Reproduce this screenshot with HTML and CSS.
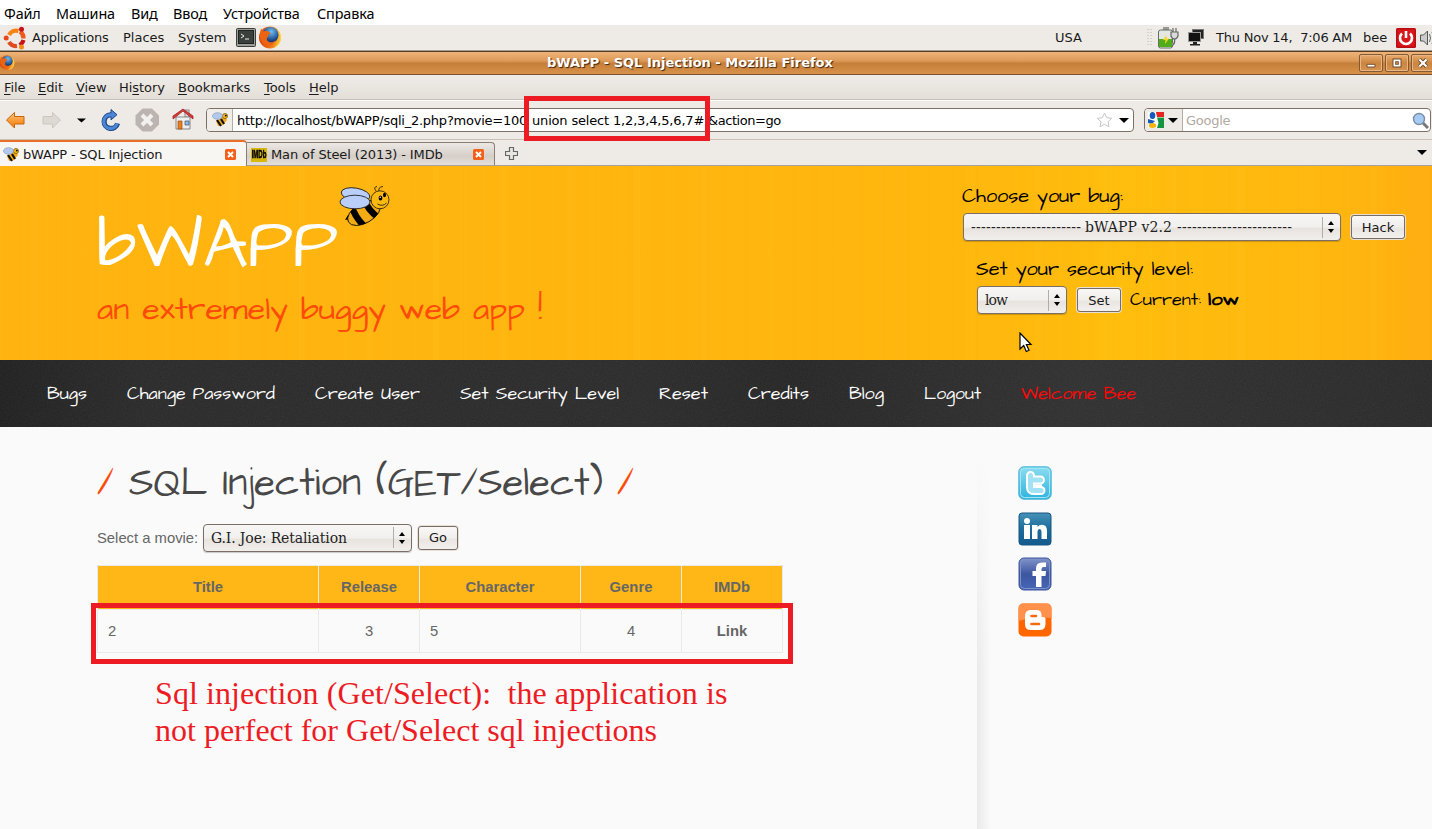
FILE: index.html
```html
<!DOCTYPE html>
<html lang="en">
<head>
<meta charset="utf-8">
<title>bWAPP - SQL Injection</title>
<link rel="stylesheet" href="styles.css">
</head>
<body>
<svg class="defs" width="0" height="0">
  <defs>
    <linearGradient id="gOrange" x1="0" y1="0" x2="0" y2="1"><stop offset="0" stop-color="#fcc27a"/><stop offset="1" stop-color="#f57900"/></linearGradient>
    <linearGradient id="gTw" x1="0" y1="0" x2="0" y2="1"><stop offset="0" stop-color="#8bdcf0"/><stop offset="1" stop-color="#2fb4de"/></linearGradient>
    <linearGradient id="gIn" x1="0" y1="0" x2="0" y2="1"><stop offset="0" stop-color="#4591b8"/><stop offset=".5" stop-color="#1c6c9c"/><stop offset="1" stop-color="#15598c"/></linearGradient>
    <linearGradient id="gFb" x1="0" y1="0" x2="0" y2="1"><stop offset="0" stop-color="#8294c9"/><stop offset=".5" stop-color="#3c56a0"/><stop offset="1" stop-color="#4867b8"/></linearGradient>
    <radialGradient id="gFx" cx=".55" cy=".3" r=".6"><stop offset="0" stop-color="#6fc0f2"/><stop offset="1" stop-color="#12377e"/></radialGradient>
    <linearGradient id="gFlame" x1="0" y1="0" x2="1" y2="0"><stop offset="0" stop-color="#d9420e"/><stop offset=".6" stop-color="#f07c14"/><stop offset="1" stop-color="#fbc93a"/></linearGradient>
    <filter id="grain"><feTurbulence type="fractalNoise" baseFrequency=".8" numOctaves="2" seed="4"/><feColorMatrix type="saturate" values="0"/></filter>
    <clipPath id="beeBody"><ellipse cx="25" cy="28" rx="18" ry="10" transform="rotate(-30 25 28)"/></clipPath>
  </defs>
  <symbol id="bee" viewBox="0 0 51 42">
    <path d="M9 30l-3 5 6-1" fill="#000"/>
    <g clip-path="url(#beeBody)"><path fill="#f3ab14" d="M0 0h51v42H0z"/><path d="M12 20q4 12 13 21M25 13q3 12 15 20" stroke="#000" stroke-width="6.500" fill="none"/></g>
    <ellipse cx="25" cy="28" rx="18" ry="10" transform="rotate(-30 25 28)" fill="none" stroke="#000" stroke-width=".8"/>
    <circle cx="41" cy="14.800" r="9" fill="#fcb90f" stroke="#000" stroke-width=".7"/>
    <path d="M37 6q-3-4 1-4.500M40 6q-1-4 4-4.500M38.500 19q5 3 9-1" fill="none" stroke="#222" stroke-width=".9"/>
    <ellipse cx="41.500" cy="13" rx="1.900" ry="2.600"/><ellipse cx="45.500" cy="10" rx="1.500" ry="2.200"/><circle cx="41.200" cy="12.300" r=".7" fill="#fff"/>
    <ellipse cx="16.500" cy="9.500" rx="14.500" ry="6.500" transform="rotate(10 16 10)" fill="#b9cef9" stroke="#222" stroke-width=".9"/>
    <ellipse cx="16" cy="17" rx="15" ry="6.800" fill="#b9cef9" stroke="#222" stroke-width=".9"/>
  </symbol>
  <symbol id="beefav" viewBox="0 0 17 15">
    <path d="M4 9l9-5 2 4-4 5-5 1z" fill="#f3ab14"/><path d="M5 8l4 6M9 7l3 5" stroke="#111" stroke-width="2.200"/><circle cx="13" cy="4" r="2.600" fill="#f5b316" stroke="#5e4708" stroke-width=".6"/><circle cx="13.800" cy="3.600" r=".9"/>
    <ellipse cx="5.500" cy="4" rx="5" ry="3.300" fill="#b3c8ee" stroke="#7d91b5" stroke-width=".6"/>
  </symbol>
  <symbol id="fox" viewBox="0 0 24 24">
    <circle cx="12" cy="11.500" r="11" fill="url(#gFlame)"/>
    <circle cx="12.500" cy="9" r="8" fill="url(#gFx)"/>
    <path d="M1.500 9L3 2.500l2.500 3q3-1.500 5.500.5l2 1.500-3 1.500q1 2-1 2.500-1 3 2.500 4.500 4 1 6-2-2 6-8 5.500Q2 17 1.500 9z" fill="#ea6412"/>
    <path d="M19 4.500q5 5 2.500 11-3 6-9 6.500 9 0 10.500-9Q23.500 7 19 4.500z" fill="#fdd651"/>
  </symbol>
  <symbol id="updown" viewBox="0 0 8 14"><path d="M1 5l3-4 3 4zM1 9l3 4 3-4z"/></symbol>
  <symbol id="down" viewBox="0 0 10 5"><path d="M0 0h10L5 5z"/></symbol>
  <symbol id="tabx" viewBox="0 0 11 11"><rect width="11" height="11" rx="1.500" fill="#f4601a"/><path d="M3 3l5 5M8 3L3 8" stroke="#fff" stroke-width="1.900"/></symbol>
</svg>

<div class="screen">
  <div class="vm-menu"><span class="w52">Файл</span><span class="w75">Машина</span><span class="w42">Вид</span><span class="w50">Ввод</span><span class="w94">Устройства</span><span>Справка</span></div>

  <div class="panel">
    <svg class="ubuntu" width="24" height="24" viewBox="0 0 24 24"><g fill="none" stroke-width="4.200"><path d="M6 9a8 8 0 0 1 9.500-4" stroke="#f58410"/><path d="M17 5.500a8 8 0 0 1 3.500 7" stroke="#ee5a1c"/><path d="M20.500 14a8 8 0 0 1-4 5" stroke="#c6141b"/><path d="M14 20a8 8 0 0 1-8-4" stroke="#e04a1c"/></g><circle cx="3.200" cy="12" r="2.500" fill="#e6481c"/><circle cx="18.500" cy="3.300" r="2.500" fill="#c7141b"/><circle cx="18.500" cy="21" r="2.500" fill="#f58a14"/></svg>
    <span class="w91 tight">Applications</span><span class="w55">Places</span><span class="w58">System</span>
    <svg width="21" height="20" viewBox="0 0 21 20"><rect x=".5" y=".5" width="19" height="18" rx="1" fill="#9a9d98" stroke="#3c3f3b"/><rect x="2.500" y="2.500" width="15" height="13" fill="#3a403c" stroke="#222"/><path d="M5 6l3 2-3 2M9 11h4" stroke="#eee" fill="none"/></svg>
    <svg class="foxbig" width="24" height="24"><use href="#fox"/></svg>
    <span class="usa">USA</span>
    <svg class="grip" width="5" height="18" viewBox="0 0 5 18"><path d="M1 0v18M4 0v18" stroke="#bbb5ad" stroke-dasharray="1 2"/></svg>
    <svg class="battery" width="23" height="22" viewBox="0 0 23 22"><rect x="6" y="0" width="6" height="3" fill="#999"/><rect x="1.500" y="3" width="14" height="18" rx="2" fill="#e5e8e2" stroke="#666b66"/><path d="M2 12h13v8H2z" fill="#4fae18"/><path d="M9.500 8l-3.500 5h2.500l-.5 4 4-5.500H9.500z" fill="#f5d32c"/><path d="M14 5h7v4q-1 3-3.500 3T14 9zM17.500 12q1 5-3 7M16 5V1M19 5V1" fill="#d8dad5" stroke="#666" stroke-width="1.200"/></svg>
    <svg class="net" width="17" height="17" viewBox="0 0 17 17"><rect x="4.500" y=".5" width="11" height="9" fill="#222" stroke="#777"/><rect x=".5" y="3.500" width="12" height="9" fill="#111" stroke="#999"/><path d="M5 13h4v2h3v1.500H2V15h3z" fill="#222"/></svg>
    <span class="clock">Thu Nov 14,&nbsp; 7:06 AM</span><span class="user">bee</span>
    <svg width="20" height="20" viewBox="0 0 20 20"><rect width="20" height="20" rx="1.500" fill="#b80d12"/><rect x="1.500" y="1.500" width="17" height="17" fill="#d9161b"/><path d="M6 5.500a6 6 0 1 0 8 0M10 3v7" fill="none" stroke="#fff" stroke-width="2.600"/></svg>
    <svg class="spk" width="13" height="16" viewBox="0 0 13 16"><path d="M.5 5h3l4-4v14l-4-4h-3z" fill="#ccc" stroke="#555"/><path d="M9.500 4q2 4 0 8M12 2q3 6 0 12" fill="none" stroke="#666"/></svg>
  </div>

  <div class="titlebar">
    <svg width="16" height="16"><use href="#fox"/></svg>
    <div class="title">bWAPP - SQL Injection - Mozilla Firefox</div>
    <div class="wbtns">
      <svg viewBox="0 0 24 18"><path d="M7.500 10.500h9v3h-9z" fill="#fff" stroke="#6b4524"/></svg>
      <svg viewBox="0 0 24 18"><path d="M9 6h6v6H9z" fill="none" stroke="#6b4524" stroke-width="4"/><path d="M9 6h6v6H9z" fill="none" stroke="#fff" stroke-width="2"/></svg>
      <svg viewBox="0 0 24 18"><path d="M8 5l8 8M16 5l-8 8" stroke="#6b4524" stroke-width="4.500"/><path d="M8 5l8 8M16 5l-8 8" stroke="#fff" stroke-width="2.500"/></svg>
    </div>
  </div>

  <div class="menubar"><span class="w34"><u>F</u>ile</span><span class="w38"><u>E</u>dit</span><span class="w43"><u>V</u>iew</span><span class="w59">Hi<u>s</u>tory</span><span class="w86"><u>B</u>ookmarks</span><span class="w45"><u>T</u>ools</span><span><u>H</u>elp</span></div>

  <div class="toolbar">
    <svg class="nav-ic" width="200" height="30" viewBox="0 0 200 30">
      <path d="M6.500 15l8-7.500v4h9.500v7.500h-9.500v4z" fill="url(#gOrange)" stroke="#c8650a"/>
      <path d="M60.500 15l-8-7.500v4H43v7.500h9.500v4z" fill="#dcd9d3" stroke="#cbc6bf"/>
      <path d="M77 13.500h9l-4.500 4z"/>
      <path d="M112 9.800h-1.500a6.800 6.800 0 1 0 7 8.500" fill="none" stroke="#204a87" stroke-width="5.200"/><path d="M111 4.500l6 5.200-6 5.200z" fill="#4c86d6" stroke="#204a87"/><path d="M112 9.800h-1.500a6.800 6.800 0 1 0 6.600 8.500" fill="none" stroke="#4c86d6" stroke-width="3.200"/>
      <path d="M142.500 3.500h9.500l7 7v9l-7 7h-9.500l-7-7v-9z" fill="#bcb4b1"/><path d="M142 10l10 10M152 10l-10 10" stroke="#f3f1ef" stroke-width="4"/>
      <rect x="185" y="5" width="4" height="7" fill="#ddd" stroke="#888"/><path d="M176 12h14v12h-14z" fill="#eee" stroke="#888"/><path d="M173 14l10-8 10 8v-3l-10-7-10 7z" fill="#d03a3a" stroke="#a22" stroke-width=".8"/><path d="M178 16h4v8h-4z" fill="#e87f23" stroke="#9b4c10" stroke-width=".7"/><path d="M185 16h4v4h-4z" fill="#8ebbe8" stroke="#456" stroke-width=".7"/>
    </svg>
    <div class="urlbox">
      <div class="fav"><svg width="17" height="15"><use href="#beefav"/></svg></div>
      <span class="url-a">http://localhost/bWAPP/sqli_2.php?movie=100</span><span class="url-b">union select 1,2,3,4,5,6,7#</span><span class="url-c">&amp;action=go</span>
      <svg class="star" width="17" height="16" viewBox="0 0 17 16"><path d="M8.500 1l2.200 4.700 5 .6-3.700 3.500 1 5-4.500-2.500L4 14.800l1-5L1.300 6.300l5-.6z" fill="#fff" stroke="#c5c5c5"/></svg>
      <svg width="10" height="5"><use href="#down"/></svg>
    </div>
    <div class="search">
      <div class="engine">
        <svg width="16" height="16" viewBox="0 0 16 16"><rect width="16" height="16" fill="#fff"/><path d="M8 0h8v5H9z" fill="#e8221e"/><path d="M9 5.500h7V16H9l1.500-5z" fill="#15953f"/><ellipse cx="4.500" cy="3.500" rx="2.800" ry="3.500" fill="#1559bd"/><path d="M0 7l7 2-3 3-4-1z" fill="#1559bd"/><ellipse cx="4.500" cy="13.500" rx="3.700" ry="2.500" fill="#f6b410"/></svg>
        <svg width="10" height="5"><use href="#down"/></svg>
      </div>
      <span class="ph">Google</span>
      <svg width="17" height="17" viewBox="0 0 17 17"><path d="M10 10l6 6" stroke="#777" stroke-width="3"/><circle cx="7" cy="7" r="5.500" fill="#a5cbf3" stroke="#7b8ea5" stroke-width="1.400"/></svg>
    </div>
  </div>

  <div class="tabs">
    <div class="tab on"><svg class="tic" width="17" height="15"><use href="#beefav"/></svg><span>bWAPP - SQL Injection</span><svg class="x" width="11" height="11"><use href="#tabx"/></svg></div>
    <div class="tab off"><div class="imdb"><b>IMDb</b></div><span>Man of Steel (2013) - IMDb</span><svg class="x" width="11" height="11"><use href="#tabx"/></svg></div>
    <svg class="plus" width="13" height="13" viewBox="0 0 13 13"><path d="M4.500.5h4v4h4v4h-4v4h-4v-4h-4v-4h4z" fill="#e8e6e0" stroke="#666" stroke-width="1.200"/></svg>
    <svg class="alltabs" width="10" height="5"><use href="#down"/></svg>
  </div>

  <header class="hero">
    <div class="brand">
      <div class="brand-row">
        <svg class="hand logo" width="241" height="78"><text x="0" y="74" textLength="241" lengthAdjust="spacingAndGlyphs">bWAPP</text></svg>
        <svg class="mascot" width="51" height="42"><use href="#bee"/></svg>
      </div>
      <svg class="hand tagline" width="450" height="50"><text x="0" y="29" textLength="428" lengthAdjust="spacingAndGlyphs">an extremely buggy web app</text><text x="441" y="29">!</text></svg>
    </div>
    <div class="controls">
      <svg class="hand label" width="166" height="28"><text x="0" y="19" textLength="161" lengthAdjust="spacingAndGlyphs">Choose your bug:</text></svg>
      <div class="row1">
        <div class="select sel-bug"><svg width="350" height="24"><text x="7" y="17" textLength="110">----------------------</text><text x="121" y="17" textLength="87">bWAPP v2.2</text><text x="213" y="17" textLength="115">-----------------------</text></svg><i></i><svg width="8" height="14"><use href="#updown"/></svg></div>
        <div class="btn hack">Hack</div>
      </div>
      <svg class="hand label l2" width="222" height="28"><text x="0" y="19" textLength="217" lengthAdjust="spacingAndGlyphs">Set your security level:</text></svg>
      <div class="row2">
        <div class="select sel-low"><svg width="60" height="24"><text x="7" y="17" textLength="23">low</text></svg><i></i><svg width="8" height="14"><use href="#updown"/></svg></div>
        <div class="btn set">Set</div>
        <svg class="hand cur" width="115" height="26"><text x="0" y="18" textLength="71" lengthAdjust="spacingAndGlyphs">Current:</text><text class="b" x="78" y="18" textLength="31" lengthAdjust="spacingAndGlyphs">low</text></svg>
      </div>
    </div>
  </header>

  <nav class="nav">
    <svg class="grain" width="1432" height="67"><rect width="1432" height="67" filter="url(#grain)"/></svg>
    <svg class="hand" width="40" height="28"><text y="19" textLength="40" lengthAdjust="spacingAndGlyphs">Bugs</text></svg>
    <svg class="hand" width="148" height="28"><text y="19" textLength="148" lengthAdjust="spacingAndGlyphs">Change Password</text></svg>
    <svg class="hand" width="105" height="28"><text y="19" textLength="105" lengthAdjust="spacingAndGlyphs">Create User</text></svg>
    <svg class="hand" width="159" height="28"><text y="19" textLength="159" lengthAdjust="spacingAndGlyphs">Set Security Level</text></svg>
    <svg class="hand" width="49" height="28"><text y="19" textLength="49" lengthAdjust="spacingAndGlyphs">Reset</text></svg>
    <svg class="hand" width="61" height="28"><text y="19" textLength="61" lengthAdjust="spacingAndGlyphs">Credits</text></svg>
    <svg class="hand" width="35" height="28"><text y="19" textLength="35" lengthAdjust="spacingAndGlyphs">Blog</text></svg>
    <svg class="hand" width="57" height="28"><text y="19" textLength="57" lengthAdjust="spacingAndGlyphs">Logout</text></svg>
    <svg class="hand red" width="115" height="28"><text y="19" textLength="115" lengthAdjust="spacingAndGlyphs">Welcome Bee</text></svg>
  </nav>

  <main class="content">
    <section class="main">
      <svg class="hand h1" width="545" height="56"><g transform="scale(1 1.14)"><text class="o" x="0" y="30.500" textLength="17" lengthAdjust="spacingAndGlyphs">/</text><text x="32" y="30.500" textLength="474" lengthAdjust="spacingAndGlyphs">SQL Injection (GET/Select)</text><text class="o" x="520" y="30.500" textLength="17" lengthAdjust="spacingAndGlyphs">/</text></g></svg>
      <div class="form">
        <span>Select a movie:</span>
        <div class="select sel-movie"><svg width="180" height="24"><text x="7" y="17" textLength="136">G.I. Joe: Retaliation</text></svg><i></i><svg width="8" height="14"><use href="#updown"/></svg></div>
        <div class="btn go">Go</div>
      </div>
      <table>
        <colgroup><col class="c221"><col class="c101"><col class="c161"><col class="c101"><col class="c101"></colgroup>
        <tr><th>Title</th><th>Release</th><th>Character</th><th>Genre</th><th>IMDb</th></tr>
        <tr><td>2</td><td class="c">3</td><td>5</td><td class="c">4</td><td class="c"><b>Link</b></td></tr>
      </table>
    </section>
    <aside class="side">
      <svg width="34" height="34" viewBox="0 0 34 34"><rect x=".8" y=".8" width="32.400" height="32.400" rx="5" fill="url(#gTw)" stroke="#45b5d8"/><rect x="2.500" y="2.500" width="29" height="29" rx="4" fill="none" stroke="#a5e4f5"/><path d="M12.500 9.500v12q0 3 3.500 3h7M12.500 14h10" fill="none" stroke="#fff" stroke-width="9" stroke-linecap="round" stroke-linejoin="round"/><path d="M12.500 9.500v12q0 3 3.500 3h7M12.500 14h10" fill="none" stroke="#a3e2f4" stroke-width="5" stroke-linecap="round"/><path d="M17 19.300h7" stroke="#fff" stroke-width="2"/></svg>
      <svg width="34" height="34" viewBox="0 0 34 34"><rect x="1" y="1" width="32" height="32" rx="3" fill="url(#gIn)" stroke="#155784"/><g fill="#fff"><circle cx="9" cy="9" r="3"/><path d="M6 13h6v14H6zM14 13h5.500v2q1.500-2.300 4.500-2.300 5 0 5 6V27h-5.500v-7.500q0-2.500-2-2.500t-2 2.500V27H14z"/></g></svg>
      <svg width="34" height="34" viewBox="0 0 34 34"><rect x="1" y="1" width="32" height="32" rx="5" fill="url(#gFb)" stroke="#3c549c"/><rect x="2.500" y="2.500" width="29" height="29" rx="4" fill="none" stroke="#7d92cb"/><path d="M18 30V19h-3.500v-5H18v-2.500Q18 5.500 24 5.500h4V10h-2.500q-2 0-2 2v2H28l-.5 5h-4v11z" fill="#fff"/></svg>
      <svg width="34" height="34" viewBox="0 0 34 34"><rect x=".5" y=".5" width="33" height="33" rx="5" fill="#f60"/><path d="M.5 18V5.500q0-5 5-5h23q5 0 5 5V15q-15-2-33 3z" fill="#ff914c"/><path d="M12.500 7h6q5 0 5 5v2h2q2 0 2 2v5q0 6-6 6h-9q-5.500 0-5.500-6v-8q0-6 5.500-6z" fill="#fff"/><path d="M13.500 13h4.500M13.500 21h7.500" stroke="#f86a10" stroke-width="2.600" stroke-linecap="round"/></svg>
    </aside>
  </main>

  <div class="mark mark-url"></div>
  <div class="mark mark-row"></div>
  <div class="note"><div class="n1">Sql injection (Get/Select):&nbsp; the application is</div><div>not perfect for Get/Select sql injections</div></div>
  <svg class="cursor" width="14" height="21" viewBox="0 0 14 21"><path d="M1 1v16l3.700-3.500 2.600 6 2.700-1.200-2.600-5.800H12z" fill="#fff" stroke="#000" stroke-width="1.200"/></svg>
</div>
</body>
</html>
```

FILE: styles.css
```css
* { box-sizing: border-box; }
body { margin: 0; font-family: "DejaVu Sans", sans-serif; font-size: 13px; color: #1a1a1a; }
svg { display: block; flex: none; }
.defs { position: absolute; }
.screen { position: relative; width: 1432px; height: 829px; overflow: hidden; background: #fafafa; }
.screen span { flex: none; white-space: nowrap; }

.vm-menu { display: flex; align-items: center; height: 25px; padding: 1px 0 0 4px; background: #fff; font: 14.4px "Noto Sans", sans-serif; color: #000; letter-spacing: -.12px; }
.w34 { width: 34px; } .w38 { width: 38px; } .w42 { width: 42px; } .w43 { width: 43px; } .w45 { width: 45px; }
.w50 { width: 50px; } .w52 { width: 52px; } .w55 { width: 55px; } .w58 { width: 58px; } .w59 { width: 59px; }
.w75 { width: 75px; } .w86 { width: 86px; } .w91 { width: 91px; } .w94 { width: 94px; }
.tight { letter-spacing: -.25px; }

.panel { display: flex; align-items: center; height: 26px; padding-left: 3px; background: #eeebe7; border-bottom: 1px solid #a59d94; }
.ubuntu { margin-right: 5px; }
.foxbig { margin-left: 1px; }
.usa { width: 92px; margin-left: 773px; }
.grip { margin-right: 5px; }
.battery { margin-right: 8px; }
.net { margin-right: 11px; }
.clock { width: 147px; letter-spacing: -.22px; }
.user { width: 33px; }
.spk { margin-left: 4px; }

.titlebar { display: flex; align-items: center; height: 24px; overflow: hidden; border-top: 1px solid #553b22; border-bottom: 1px solid #7b542f; background: linear-gradient(#efb37a, #dc9a58 40%, #c67f38 52%, #d8924b); }
.titlebar > svg { margin-left: -1px; }
.title { flex: none; width: 1350px; padding-bottom: 2px; text-align: center; font-weight: bold; color: #fff; text-shadow: 1px 1px 1px #3c2712; }
.wbtns { display: flex; flex: none; gap: 2px; margin-left: -6px; }
.wbtns svg { width: 24px; height: 18px; border: 1px solid #855a32; border-radius: 2px; background: linear-gradient(#e8ab6e, #ca8540 50%, #d69351); box-shadow: inset 0 0 0 1px #e9b582; }

.menubar { display: flex; align-items: center; height: 25px; padding-left: 4px; background: linear-gradient(#efebe7, #e4dfd8); border-bottom: 1px solid #c9c0b7; letter-spacing: -.05px; }
u { text-underline-offset: 2px; }
.toolbar { display: flex; align-items: center; height: 40px; background: #eeebe7; border-top: 1px solid #fff; border-bottom: 1px solid #c9c0b7; }
.nav-ic { margin-right: 6px; }
.urlbox, .search { display: flex; align-items: center; height: 24px; background: #fff; border: 1px solid #7d7067; border-radius: 4px; overflow: hidden; color: #000; }
.urlbox { width: 928px; }
.fav { width: 26px; height: 100%; padding: 3px 0 0 5px; background: #f1eeea; border-right: 1px solid #b6aca1; margin-right: 4px; }
.url-a { width: 295px; letter-spacing: -.24px; }
.url-b { width: 176px; letter-spacing: -.17px; }
.url-c { width: 388px; letter-spacing: -.45px; }
.star { margin-right: 6px; }
.search { width: 287px; margin-left: 10px; }
.engine { display: flex; align-items: center; gap: 4px; width: 38px; height: 100%; padding-left: 3px; background: #eeebe7; border-right: 1px solid #b6aca1; }
.ph { width: 229px; padding-left: 3px; color: #b1a89e; letter-spacing: -.25px; }

.tabs { display: flex; align-items: flex-end; height: 26px; background: #eeebe7; border-bottom: 1px solid #a9a29a; }
.tab { display: flex; align-items: center; padding-left: 3px; }
.tab span { width: 202px; letter-spacing: -.2px; }
.tab.on { width: 247px; height: 26px; margin-bottom: -1px; background: #f8f6f3; border-top: 2px solid #e8702a; border-right: 1px solid #8b7d71; border-top-right-radius: 4px; }
.tab.off { width: 248px; height: 23px; background: linear-gradient(#ece8e4, #d6cfc9 60%, #e4dfdb); border: 1px solid #8b7d71; border-width: 1px 1px 0 0; border-top-right-radius: 4px; }
.tic { margin-right: 3px; }
.imdb { display: flex; align-items: center; justify-content: center; width: 16px; height: 14px; background: #d6b80e; margin: 1px 4px 0 1px; }
.imdb b { font: bold 6px "Liberation Sans", sans-serif; color: #000; transform: scaleY(1.7); -webkit-text-stroke: .3px #000; }
.tab.off span { width: 202px; letter-spacing: -.12px; }
.plus { margin: 0 0 5px 10px; }
.alltabs { margin: 0 5px 10px auto; }

.hero { display: flex; height: 194px; background:
  repeating-linear-gradient(90deg, rgba(255,200,40,.06) 0 2px, transparent 2px 9px, rgba(245,160,10,.04) 9px 12px, transparent 12px 23px),
  repeating-linear-gradient(90deg, transparent 0 31px, rgba(255,210,60,.06) 31px 37px, transparent 37px 67px),
  linear-gradient(90deg, #ffb310, #ffb50f 30%, #ffb60d 65%, #ffbd0d 78%, #ffb80f 92%, #ffae11); }
.hand { overflow: visible; font-family: "Architects Daughter", Lato, sans-serif; fill: currentColor; }
.brand { width: 962px; padding: 19px 0 0 97px; }
.brand-row { display: flex; align-items: flex-start; height: 105px; }
.logo { margin: 7px 1px 0 0; color: #fff; font-size: 70px; }
.tagline { color: #ff4a0a; font-size: 32px; }
.controls { padding-top: 17px; color: #000; }
.label { font-size: 19px; }
.row1, .row2 { display: flex; align-items: center; }
.row1 { padding: 2px 0 0 1px; }
.l2 { margin: 15px 0 0 14px; }
.row2 { padding-left: 15px; margin-top: 2px; }
.select { display: flex; align-items: center; height: 28px; border: 1px solid #7a6e66; border-radius: 4px; background: linear-gradient(#f7f6f4, #f2f0ee 50%, #e7e3df 55%, #f1efec); font: 14px "DejaVu Serif", serif; color: #000; box-shadow: 0 1px 1px rgba(0,0,0,.2); }
.select text { fill: #222; }
.select i { width: 1px; height: 21px; margin: 0 4px 0 auto; background: #b3aba4; }
.select > svg:last-child { margin-right: 5px; }
.sel-bug { width: 378px; }
.sel-low { width: 90px; }
.sel-bug svg:first-child { margin-right: -10px; }
.sel-movie { width: 209px; }
.btn { display: flex; align-items: center; justify-content: center; height: 24px; border: 1px solid #786c64; border-radius: 3px; background: linear-gradient(#f9f8f6, #f0eeeb 50%, #e9e5e1 55%, #f2f0ed); color: #1a1a1a; box-shadow: 0 0 0 1px #e6dfd5; }
.hack { width: 54px; margin-left: 10px; }
.set { width: 44px; margin: 0 9px 0 10px; }
.cur { font-size: 17px; }
.b { font-weight: bold; }

.nav { position: relative; display: flex; gap: 40px; height: 67px; padding: 20px 0 0 47px; color: #fff; font-size: 18px; background: linear-gradient(90deg, #1f1f1f, #292929 10%, #2a2a2a 45%, #252525 55%, #2f2f2f 75%, #292929); }
.grain { position: absolute; left: 0; top: 0; opacity: .09; }
.red { color: #f00; }

.content { display: flex; height: 402px; }
.main { width: 977px; padding: 33px 0 0 97px; }
.h1 { color: #484848; font-size: 35px; }
.o { fill: #ff4b0c; }
.form { display: flex; align-items: center; margin-top: 7px; height: 29px; font: 14.8px "Liberation Sans", sans-serif; color: #666; }
.form span { width: 106px; }
.go { width: 40px; margin-left: 6px; font: 13px "DejaVu Sans", sans-serif; }
table { width: 686px; margin-top: 13px; table-layout: fixed; border-collapse: collapse; font: 14.8px "Liberation Sans", sans-serif; color: #666; }
.c221 { width: 221px; } .c101 { width: 101px; } .c161 { width: 161px; }
th, td { border: 1px solid #eaeaea; padding: 0 10px 1px; text-align: left; height: 44px; }
td { height: 43px; }
th { background: #ffb717; text-align: center; }
.c { text-align: center; }
.side { flex: 1; display: flex; flex-direction: column; gap: 11.600px; padding: 39px 0 0 41px; background: linear-gradient(#fafafa 8%, rgba(250,250,250,0) 60%), linear-gradient(90deg, #eaeaea, #fafafa 14px); }

.mark { position: absolute; border: 5px solid #ed1c24; }
.mark-url { left: 524px; top: 96px; width: 186px; height: 45px; }
.mark-row { left: 91px; top: 603px; width: 702px; height: 61px; }
.note { position: absolute; left: 155px; top: 675px; font: 32px/37px "Liberation Serif", serif; color: #ed1c24; white-space: nowrap; }
.n1 { letter-spacing: .08px; }
.cursor { position: absolute; left: 1019px; top: 332px; }
```
